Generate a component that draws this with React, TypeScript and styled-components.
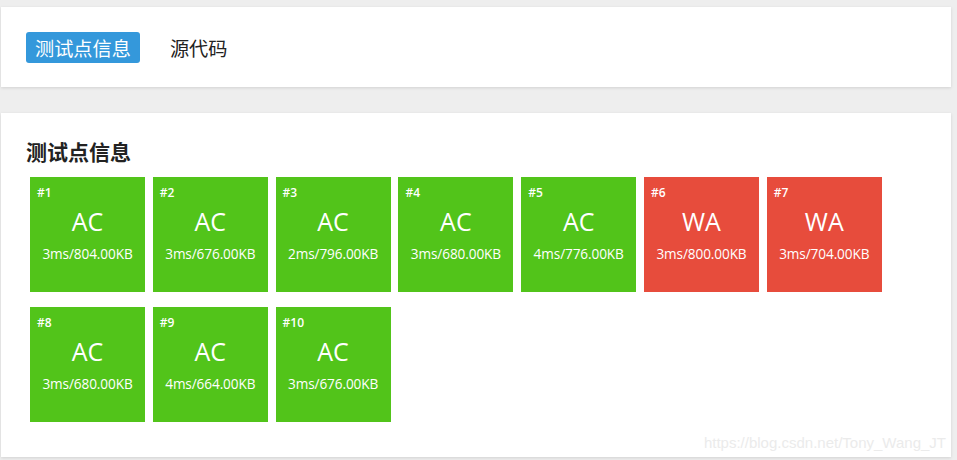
import React from "react";
import styled, { createGlobalStyle } from "styled-components";

const Global = createGlobalStyle`
  html, body { margin: 0; padding: 0; background: #eeeeee; }
  body { font-family: "Open Sans", "Noto Sans CJK SC", sans-serif; }
`;

const Page = styled.div`
  width: 957px;
  height: 460px;
  box-sizing: border-box;
  padding: 7px 6px 0 1px;
  display: flex;
  flex-direction: column;
  gap: 26px;
  overflow: hidden;
`;

const Card = styled.div`
  background: #fff;
  box-shadow: 0 1px 3px rgba(0, 0, 0, 0.12);
  position: relative;
`;

const TabBar = styled(Card)`
  height: 80px;
  box-sizing: border-box;
  padding: 0 25px;
  display: flex;
  align-items: center;
  gap: 21px;
`;

const Tab = styled.div<{ $active?: boolean }>`
  height: 31px;
  box-sizing: border-box;
  padding: 0 9px;
  border-radius: 3px;
  display: flex;
  align-items: center;
  font-family: "Noto Sans CJK SC", sans-serif;
  font-size: 19.2px;
  color: ${(p) => (p.$active ? "#fff" : "#222")};
  background: ${(p) => (p.$active ? "#3498db" : "transparent")};
  margin-top: 1px;
`;

const Panel = styled(Card)`
  height: 344px;
  box-sizing: border-box;
  padding: 24px 25px 0 25px;
`;

const Heading = styled.h2`
  margin: 0 0 12px 0;
  font-family: "Noto Sans CJK SC", sans-serif;
  font-size: 21px;
  font-weight: 700;
  line-height: 28px;
  color: #222;
`;

const Grid = styled.div`
  display: flex;
  flex-wrap: wrap;
  column-gap: 7.8px;
  row-gap: 15px;
  padding-left: 4px;
  width: 870px;
`;

const Tile = styled.div<{ $ok: boolean }>`
  width: 115px;
  height: 115px;
  box-sizing: border-box;
  background: ${(p) => (p.$ok ? "#52c41a" : "#e74c3c")};
  color: #fff;
  display: flex;
  flex-direction: column;
  padding: 8px 7px 0 7px;
`;

const Num = styled.div`
  font-size: 12px;
  font-weight: 600;
  line-height: 16px;
  text-align: left;
`;

const Status = styled.div`
  font-size: 25px;
  line-height: 32px;
  text-align: center;
  margin-top: 4px;
`;

const Info = styled.div`
  font-size: 13.6px;
  line-height: 18px;
  text-align: center;
  margin-top: 8px;
  white-space: nowrap;
  letter-spacing: -0.1px;
  margin-left: -4px;
  margin-right: -4px;
`;

const Watermark = styled.div`
  position: absolute;
  right: 5px;
  bottom: 6px;
  font-family: "Liberation Sans", Arial, sans-serif;
  font-size: 15px;
  color: #ebebeb;
`;

const cases = [
  { s: "AC", i: "3ms/804.00KB" },
  { s: "AC", i: "3ms/676.00KB" },
  { s: "AC", i: "2ms/796.00KB" },
  { s: "AC", i: "3ms/680.00KB" },
  { s: "AC", i: "4ms/776.00KB" },
  { s: "WA", i: "3ms/800.00KB" },
  { s: "WA", i: "3ms/704.00KB" },
  { s: "AC", i: "3ms/680.00KB" },
  { s: "AC", i: "4ms/664.00KB" },
  { s: "AC", i: "3ms/676.00KB" },
];

export default function App() {
  return (
    <>
      <Global />
      <Page>
        <TabBar>
          <Tab $active>测试点信息</Tab>
          <Tab>源代码</Tab>
        </TabBar>
        <Panel>
          <Heading>测试点信息</Heading>
          <Grid>
            {cases.map((c, idx) => (
              <Tile key={idx} $ok={c.s === "AC"}>
                <Num>#{idx + 1}</Num>
                <Status>{c.s}</Status>
                <Info>{c.i}</Info>
              </Tile>
            ))}
          </Grid>
          <Watermark>https://blog.csdn.net/Tony_Wang_JT</Watermark>
        </Panel>
      </Page>
    </>
  );
}
